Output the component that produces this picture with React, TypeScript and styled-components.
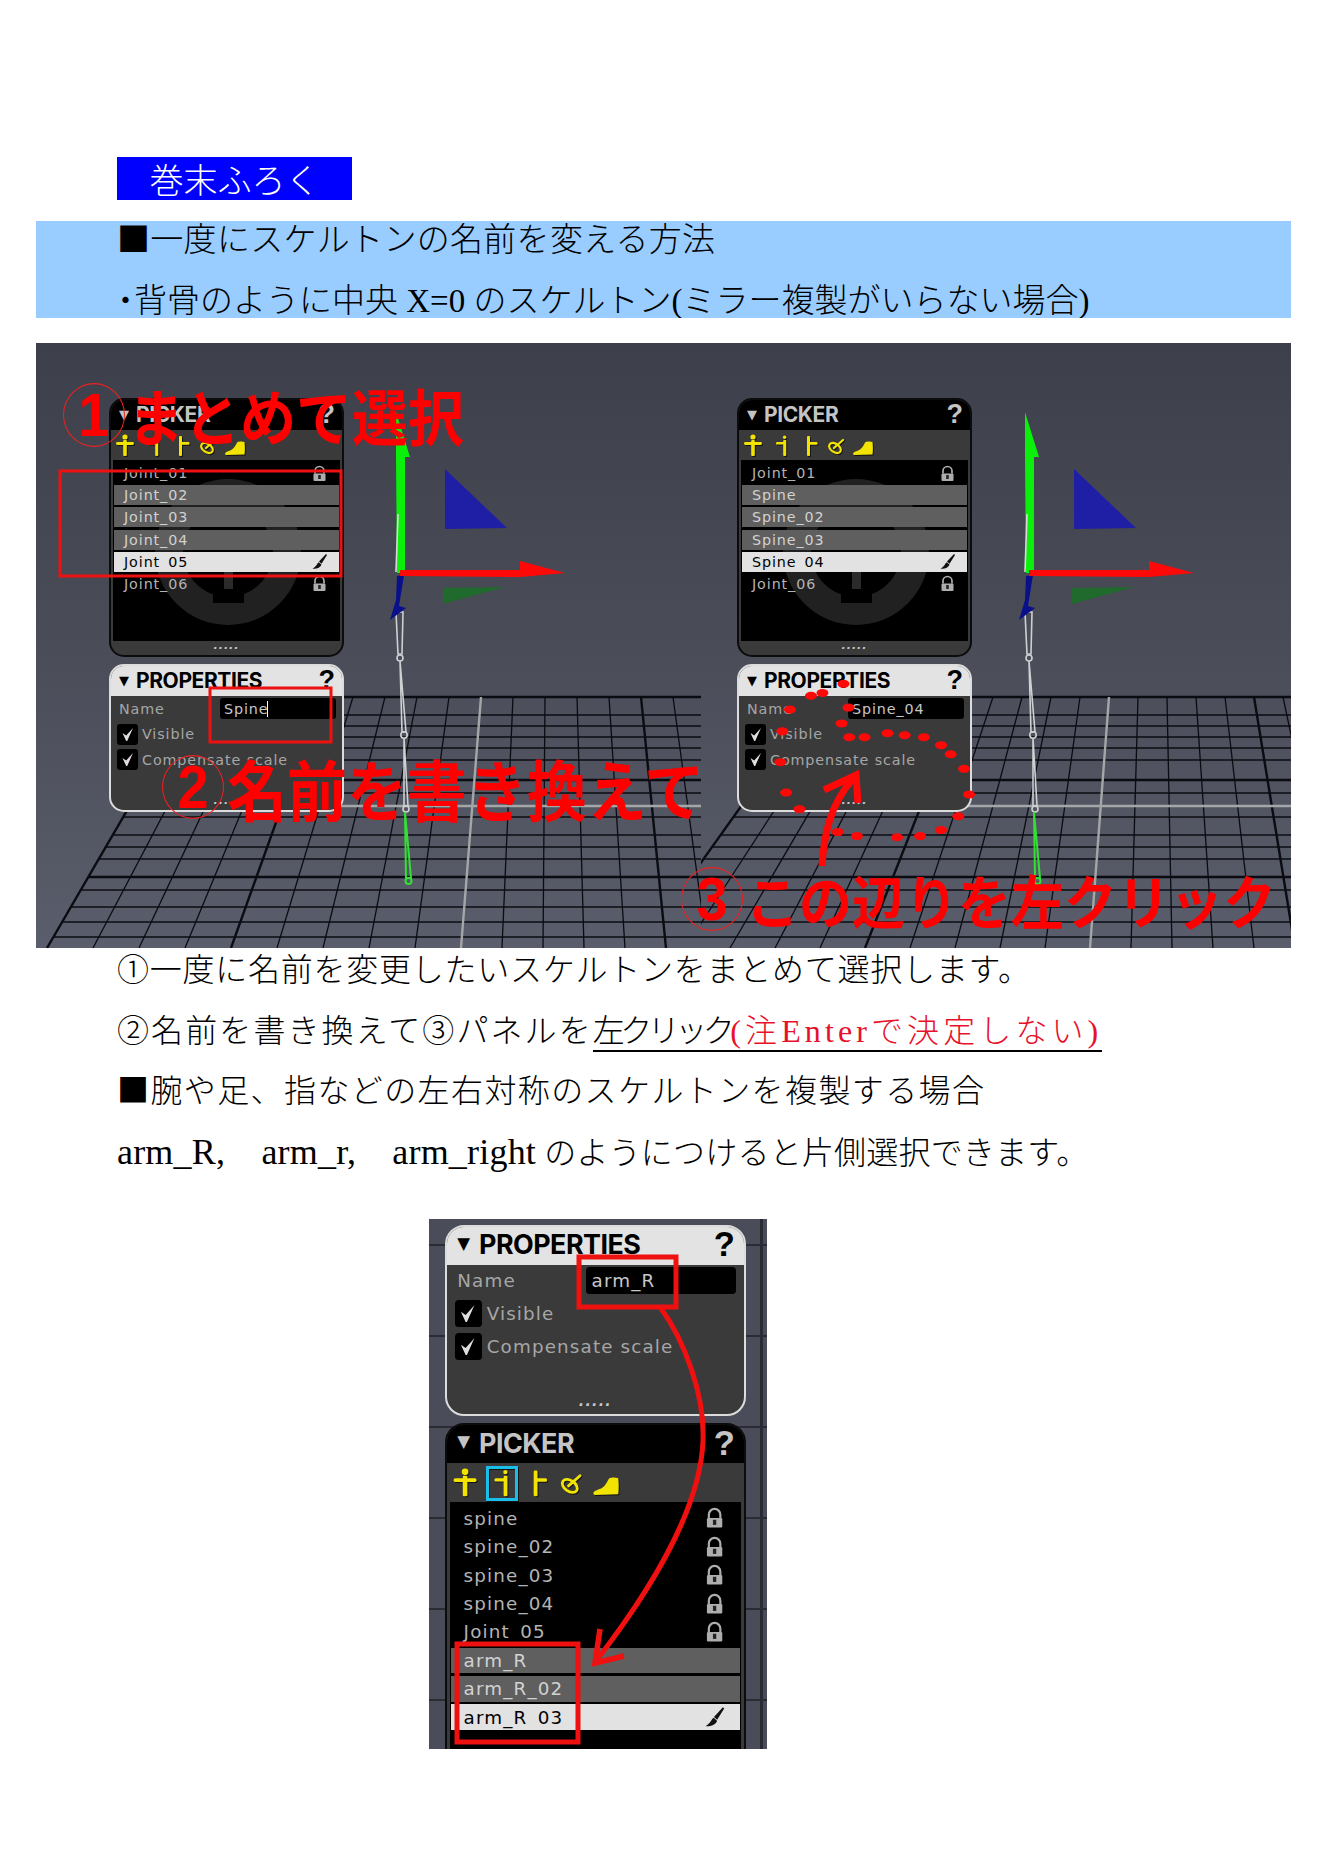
import React from "react";
import styled, { createGlobalStyle } from "styled-components";

const BODY_FONT = `"Liberation Serif", "Noto Sans CJK JP", serif`;
const GOTHIC = `"Noto Sans CJK JP", "Liberation Sans", sans-serif`;
const UI_FONT = `"DejaVu Sans", "Liberation Sans", sans-serif`;

const Global = createGlobalStyle`
  html, body { margin: 0; padding: 0; background: #fff; }
  body { font-family: ${BODY_FONT}; color: #000; }
`;

const Page = styled.div`
  width: 1328px;
  height: 1875px;
  box-sizing: border-box;
  padding: 157px 37px 0 36px;
  background: #fff;
  overflow: hidden;
`;

const Banner = styled.div`
  margin-left: 81px;
  width: 235px;
  height: 43px;
  display: flex;
  align-items: center;
  justify-content: center;
  background: #0000ff;
  color: #fff;
  font-size: 34px;
  font-weight: 300;
`;

const HeadBand = styled.div`
  margin-top: 21px;
  height: 97px;
  padding-left: 81px;
  display: flex;
  flex-direction: column;
  gap: 25px;
  background: #99ccff;
  overflow: hidden;
`;

const HeadLine = styled.div<{ $spacing?: number }>`
  height: 36px;
  line-height: 38px;
  font-size: 33px;
  font-weight: 300;
  white-space: nowrap;
  letter-spacing: ${(p) => p.$spacing ?? 0}px;
`;

const Square = styled.span`
  font-family: ${GOTHIC};
  font-weight: 400;
  line-height: 0;
`;

const HalfDot = styled.span`
  display: inline-block;
  width: 25px;
  margin-left: -8px;
`;

const Viewport = styled.div`
  position: relative;
  margin-top: 25px;
  height: 605px;
  overflow: hidden;
  background: linear-gradient(#3d3f4a 0%, #4a4c58 50%, #5a5d6b 100%);
`;

const CanvasSvg = styled.svg`
  position: absolute;
  inset: 0;
  width: 100%;
  height: 100%;
`;

const WindowSpot = styled.div<{ $x: number; $y: number }>`
  position: absolute;
  left: ${(p) => p.$x}px;
  top: ${(p) => p.$y}px;
`;

const PanelShell = styled.div<{ $light?: boolean; $h: number; $zoom?: number }>`
  width: 235px;
  height: ${(p) => p.$h}px;
  flex: none;
  box-sizing: border-box;
  zoom: ${(p) => p.$zoom ?? 1};
  display: flex;
  flex-direction: column;
  border-radius: 15px;
  border: 2px solid ${(p) => (p.$light ? "#dcdcdc" : "#0c0c0c")};
  background: #3a3a3a;
  overflow: hidden;
  font-family: ${UI_FONT};
`;

const PanelHeader = styled.div<{ $light?: boolean }>`
  flex: 0 0 30px;
  box-sizing: border-box;
  display: flex;
  align-items: center;
  padding: 0 7px 2px 8px;
  background: ${(p) => (p.$light ? "#e3e3e3" : "#000")};
  color: ${(p) => (p.$light ? "#000" : "#c4c4c4")};
`;

const Caret = styled.span`
  font-size: 13px;
  line-height: 1;
  width: 17px;
  font-family: "DejaVu Sans", sans-serif;
`;

const Title = styled.span`
  font-family: "Inter", "Liberation Sans", sans-serif;
  font-weight: 700;
  font-size: 21px;
  letter-spacing: -0.4px;
`;

const Help = styled.span`
  margin-left: auto;
  font-family: "Liberation Sans", sans-serif;
  font-weight: 700;
  font-size: 27px;
  line-height: 1;
`;

const ToolBar = styled.div`
  flex: 0 0 30px;
  display: flex;
  align-items: center;
  padding: 2px 0 0 3px;
  box-sizing: border-box;
`;

const ToolIcon = styled.svg<{ $after: number; $active?: boolean }>`
  width: 22px;
  height: 24px;
  margin-right: ${(p) => p.$after}px;
  flex: none;
  overflow: visible;
  filter: drop-shadow(1px 1px 0 #141414);
  ${(p) => (p.$active ? "outline: 3px solid #19bfe8; outline-offset: -1px;" : "")}
`;

const JointList = styled.div`
  position: relative;
  flex: 1;
  margin: 0 2px;
  padding-top: 3px;
  background: #000;
  display: flex;
  flex-direction: column;
  gap: 2.2px;
  overflow: hidden;
`;

const Watermark = styled.svg`
  position: absolute;
  left: 42px;
  top: 19px;
  width: 146px;
  height: 146px;
`;

type RowKind = "plain" | "picked" | "active";

const JointRow = styled.div<{ $kind: RowKind }>`
  position: relative;
  flex: 0 0 20px;
  display: flex;
  align-items: center;
  justify-content: space-between;
  padding: 0 12px 0 10px;
  margin: 0 1px;
  font-size: 14.3px;
  letter-spacing: 0.9px;
  color: ${(p) => (p.$kind === "active" ? "#000" : p.$kind === "picked" ? "#d2d2d2" : "#b4b4b4")};
  background: ${(p) =>
    p.$kind === "active" ? "#e2e2e2" : p.$kind === "picked" ? "#5f5f5f" : "transparent"};
`;

const HiddenBar = styled.span`
  color: transparent;
`;

const RowIcon = styled.svg`
  width: 15px;
  height: 17px;
  flex: none;
`;

const PanelFooter = styled.div`
  flex: 0 0 14px;
  display: flex;
  justify-content: center;
  align-items: flex-start;
  color: #c8c8c8;
  font-size: 11px;
  line-height: 9px;
  font-style: italic;
  font-weight: 700;
  letter-spacing: 1px;
`;

const PropBody = styled.div`
  flex: 1;
  display: flex;
  flex-direction: column;
  padding: 2px 6px 0 6px;
  gap: 4.5px;
  color: #a6a6a6;
  font-size: 14.3px;
  letter-spacing: 0.9px;
`;

const NameRow = styled.div`
  display: flex;
  align-items: center;
  height: 21px;
  margin-left: 2px;
`;

const NameLabel = styled.span`
  width: 101px;
  flex: none;
`;

const NameField = styled.div`
  width: 118px;
  height: 21px;
  box-sizing: border-box;
  padding-left: 4px;
  display: flex;
  align-items: center;
  background: #000;
  border-radius: 3px;
  color: #c8c8c8;
`;

const TextCaret = styled.i`
  display: inline-block;
  width: 1px;
  height: 16px;
  margin-left: -1px;
  background: #fff;
`;

const CheckRow = styled.div`
  display: flex;
  align-items: center;
  height: 21px;
  gap: 4px;
`;

const CheckBox = styled.div`
  width: 21px;
  height: 21px;
  border-radius: 3px;
  background: #000;
  display: flex;
  align-items: center;
  justify-content: center;
  flex: none;
`;

const Spacer = styled.div`
  flex: 1;
`;

const Annotation = styled.div<{ $x: number; $y: number; $size: number }>`
  position: absolute;
  left: ${(p) => p.$x}px;
  top: ${(p) => p.$y}px;
  display: flex;
  align-items: center;
  color: #ff0000;
  font-family: ${GOTHIC};
  font-weight: 700;
  font-size: ${(p) => p.$size}px;
  line-height: 1;
  white-space: nowrap;
  transform-origin: left center;
  transform: scaleY(1.1);
`;

const CircledNumber = styled.span`
  width: 62px;
  height: 58px;
  flex: none;
  box-sizing: border-box;
  margin-right: 3px;
  display: flex;
  align-items: center;
  justify-content: center;
  border: 1.5px solid #f02020;
  border-radius: 50%;
  font-family: "Liberation Sans", sans-serif;
  font-size: 56px;
`;

const BodyBlock = styled.div`
  margin-left: 81px;
  display: flex;
  flex-direction: column;
  gap: 16.5px;
`;

const BodyLine = styled.div<{ $spacing?: number }>`
  height: 44px;
  line-height: 44px;
  font-size: 32px;
  font-weight: 300;
  white-space: nowrap;
  letter-spacing: ${(p) => p.$spacing ?? 0}px;
`;

const Spaced = styled.span<{ $spacing: number }>`
  letter-spacing: ${(p) => p.$spacing}px;
`;

const Underlined = styled.span`
  display: inline-block;
  line-height: 38px;
  border-bottom: 2px solid #000;
`;

const RedNote = styled.span`
  color: #e8112a;
  letter-spacing: 4.1px;
`;

const LatinName = styled.span`
  font-size: 36px;
`;

const Figure = styled.div`
  position: relative;
  margin: 45px 0 0 393px;
  width: 338px;
  height: 530px;
  box-sizing: border-box;
  padding: 6px 0 0 16px;
  display: flex;
  flex-direction: column;
  gap: 7px;
  overflow: hidden;
  background-color: #4a4c59;
  background-image: linear-gradient(#2b2c33 2px, transparent 2px),
    linear-gradient(90deg, transparent 331px, #2b2c33 331px, #2b2c33 334px, transparent 334px);
  background-size: 100% 91px, 100% 100%;
  background-position: 0 25px, 0 0;
`;

const Lock = () => (
  <RowIcon viewBox="0 0 15 17">
    <path d="M3 8.5V6a4.5 4.5 0 0 1 9 0V8.5" fill="none" stroke="#aeaeae" strokeWidth="1.7" />
    <rect x="1.5" y="8.5" width="12" height="7.5" rx="1" fill="#aeaeae" />
    <rect x="6.2" y="10" width="2.6" height="4" fill="#222" />
  </RowIcon>
);

const Brush = () => (
  <RowIcon viewBox="0 0 15 17">
    <path d="M14 1 L7 8.5 L9.5 10.8 L15 2 Z" fill="#111" />
    <path d="M6.8 9.2 C5 10.2 5 13 0.5 15.8 C5 16 8.8 14.4 9.4 11.5 Z" fill="#111" />
  </RowIcon>
);

const Y = "#f2e400";

const toolIcons: { after: number; draw: React.ReactNode }[] = [
  {
    after: 7,
    draw: (
      <g fill={Y}>
        <circle cx="11" cy="3" r="2.6" />
        <rect x="9.2" y="6" width="3.6" height="16" rx="1" />
        <rect x="2" y="8" width="18" height="3" rx="1.4" />
      </g>
    ),
  },
  {
    after: 8,
    draw: (
      <g fill={Y}>
        <circle cx="13.6" cy="3.2" r="1.7" />
        <rect x="12.2" y="6" width="3" height="16" rx="1" />
        <rect x="5" y="8" width="9" height="2.6" rx="1.2" />
      </g>
    ),
  },
  {
    after: 2,
    draw: (
      <g fill={Y}>
        <rect x="6" y="2" width="3" height="20" rx="1" />
        <rect x="7" y="8" width="9.5" height="2.8" rx="1.2" />
      </g>
    ),
  },
  {
    after: 5,
    draw: (
      <g fill="none" stroke={Y} strokeWidth="2.2" strokeLinecap="round">
        <ellipse cx="10" cy="14" rx="6.5" ry="4.2" transform="rotate(35 10 14)" />
        <path d="M18 6 L9 14" />
      </g>
    ),
  },
  {
    after: 0,
    draw: (
      <path
        d="M1 20 C1 17.5 6 17 8 15.5 C11 13.5 12 10 13.5 8 C15 7.5 18 7 20.5 8 C21 12 21 17 20.5 20.5 L2 21 Z"
        fill={Y}
      />
    ),
  },
];

const joints = (names: string[], picked: number[], active: number, locked: number[]) =>
  names.map((name, i) => ({
    name,
    kind: (i === active ? "active" : picked.includes(i) ? "picked" : "plain") as RowKind,
    locked: locked.includes(i),
    barHidden: i === active || name === "Joint_05",
  }));

type JointInfo = ReturnType<typeof joints>[number];

const JointName: React.FC<{ name: string; barHidden: boolean }> = ({ name, barHidden }) => {
  if (!barHidden) return <span>{name}</span>;
  const cut = name.lastIndexOf("_");
  return (
    <span>
      {name.slice(0, cut)}
      <HiddenBar>_</HiddenBar>
      {name.slice(cut + 1)}
    </span>
  );
};

const Picker: React.FC<{
  rows: JointInfo[];
  zoom?: number;
  activeTool?: number;
  watermark?: boolean;
  height?: number;
}> = ({ rows, zoom, activeTool, watermark, height = 259 }) => (
  <PanelShell $h={height} $zoom={zoom}>
    <PanelHeader>
      <Caret>▼</Caret>
      <Title>PICKER</Title>
      <Help>?</Help>
    </PanelHeader>
    <ToolBar>
      {toolIcons.map((ic, i) => (
        <ToolIcon key={i} viewBox="0 0 22 24" $after={ic.after} $active={i === activeTool}>
          {ic.draw}
        </ToolIcon>
      ))}
    </ToolBar>
    <JointList>
      {watermark && (
        <Watermark viewBox="0 0 146 146">
          <circle cx="73" cy="73" r="73" fill="#212121" />
          <circle cx="73" cy="73" r="45" fill="#000" />
          <rect x="58" y="112" width="31" height="12" fill="#000" />
          <rect x="69" y="92" width="9" height="18" fill="#2b2b2b" />
        </Watermark>
      )}
      {rows.map((r) => (
        <JointRow key={r.name} $kind={r.kind}>
          <JointName name={r.name} barHidden={r.barHidden} />
          {r.kind === "active" ? <Brush /> : r.locked ? <Lock /> : null}
        </JointRow>
      ))}
    </JointList>
    <PanelFooter>.....</PanelFooter>
  </PanelShell>
);

const Tick = () => (
  <svg width="14" height="15" viewBox="0 0 14 15">
    <path d="M1.5 6 L5.2 8.6 L12 1 L6.2 14 L5.2 14 Z" fill="#dedede" />
  </svg>
);

const Properties: React.FC<{ value: string; zoom?: number; caret?: boolean; height?: number }> = ({
  value,
  zoom,
  caret,
  height = 148,
}) => (
  <PanelShell $h={height} $light $zoom={zoom}>
    <PanelHeader $light>
      <Caret>▼</Caret>
      <Title>PROPERTIES</Title>
      <Help>?</Help>
    </PanelHeader>
    <PropBody>
      <NameRow>
        <NameLabel>Name</NameLabel>
        <NameField>
          {value}
          {caret && <TextCaret />}
        </NameField>
      </NameRow>
      <CheckRow>
        <CheckBox>
          <Tick />
        </CheckBox>
        Visible
      </CheckRow>
      <CheckRow>
        <CheckBox>
          <Tick />
        </CheckBox>
        Compensate scale
      </CheckRow>
      <Spacer />
    </PropBody>
    <PanelFooter>.....</PanelFooter>
  </PanelShell>
);

const HORIZONTALS = [697, 715, 726, 737, 748, 760, 780, 793, 817, 835, 847, 859, 877, 890, 907, 922, 937];
const THICK_ROWS = [697, 780, 877];

const GridFloor: React.FC<{
  axisTop: number;
  axisBottom: number;
  topStep: number;
  leftStep: number;
  rightStep: number;
  minI: number;
  maxI: number;
  clip: string;
}> = ({ axisTop, axisBottom, topStep, leftStep, rightStep, minI, maxI, clip }) => {
  const xAt = (i: number, y: number) => {
    const t = (y - 697) / 251;
    const top = axisTop + i * topStep;
    const bottom = axisBottom + i * (i < 0 ? leftStep : rightStep);
    return top + (bottom - top) * t;
  };
  const columns: number[] = [];
  for (let i = minI; i <= maxI; i++) columns.push(i);
  return (
    <g clipPath={`url(#${clip})`}>
      {HORIZONTALS.map((y) => (
        <line
          key={y}
          x1={xAt(minI, y)}
          x2={xAt(maxI, y)}
          y1={y}
          y2={y}
          stroke="#0b0c12"
          strokeWidth={THICK_ROWS.includes(y) ? 2.6 : 1.5}
        />
      ))}
      {columns
        .filter((i) => i !== 0)
        .map((i) => (
          <line
            key={i}
            x1={xAt(i, 697)}
            y1={697}
            x2={xAt(i, 948)}
            y2={948}
            stroke="#0b0c12"
            strokeWidth={i % 5 === 0 || i === minI ? 2.4 : 1.3}
          />
        ))}
      <line x1={xAt(0, 697)} y1={697} x2={xAt(0, 948)} y2={948} stroke="#a5a6a8" strokeWidth="2.4" />
      <line x1={xAt(minI, 806)} x2={xAt(maxI, 806)} y1={806} y2={806} stroke="#a5a6a8" strokeWidth="2.6" />
    </g>
  );
};

const Rig: React.FC<{ shift: number }> = ({ shift }) => (
  <g transform={`translate(${shift} 0)`}>
    <polygon points="1074,469 1074,529 1136,528" fill="#1f1fa5" />
    <polygon points="1072,588 1072,604 1134,587" fill="#1f6a2c" />
    <g fill="none" stroke="#cfd0d2" strokeWidth="1.6">
      <path d="M1025 612 L1032 612 L1031 654 L1027 654 Z" />
      <circle cx="1029" cy="658" r="3" />
      <path d="M1029 661 L1035 732 L1031 732 Z" />
      <circle cx="1033" cy="735" r="3.2" />
      <path d="M1033 738 L1037 806 L1033 806 Z" />
      <circle cx="1035" cy="809" r="3" />
    </g>
    <polygon points="1025,457 1025,412 1039,457 1034,457 1034,573 1026,573" fill="#0bf00b" />
    <path d="M1027 514 L1025 572" fill="none" stroke="#d8d8d8" strokeWidth="1.6" />
    <polygon points="1033,575 1026,576 1025,600 1019,620 1035,608 1028,606" fill="#0a0f8a" />
    <polygon points="1029,570 1149,570 1149,561 1194,573 1149,577 1029,576" fill="#ff0808" />
    <g fill="none" stroke="#33e033" strokeWidth="2">
      <path d="M1034 812 L1040 878 L1035 878 Z" />
      <circle cx="1037.5" cy="881" r="3" />
    </g>
  </g>
);

const DOTS: [number, number][] = [
  [290, 900], [320, 893], [375, 870], [235, 935], [215, 990], [210, 1068], [225, 1145], [260, 1187],
  [360, 1245], [410, 1255], [515, 1258], [575, 1255], [630, 1240], [675, 1205], [703, 1150], [690, 1085],
  [655, 1048], [630, 1025], [585, 1005], [535, 1000], [490, 995], [430, 1005], [390, 1005], [370, 970], [388, 930],
];

const leftRows = joints(
  ["Joint_01", "Joint_02", "Joint_03", "Joint_04", "Joint_05", "Joint_06"],
  [1, 2, 3],
  4,
  [0, 5]
);
const rightRows = joints(
  ["Joint_01", "Spine", "Spine_02", "Spine_03", "Spine_04", "Joint_06"],
  [1, 2, 3],
  4,
  [0, 5]
);
const armRows = joints(
  ["spine", "spine_02", "spine_03", "spine_04", "Joint_05", "arm_R", "arm_R_02", "arm_R_03"],
  [5, 6],
  7,
  [0, 1, 2, 3, 4]
);

export default function App() {
  return (
    <>
      <Global />
      <Page>
        <Banner>巻末ふろく</Banner>
        <HeadBand>
          <HeadLine $spacing={0.3}>
            <Square>■</Square>一度にスケルトンの名前を変える方法
          </HeadLine>
          <HeadLine>
            <HalfDot>・</HalfDot>背骨のように中央 X=0 のスケルトン(ミラー複製がいらない場合)
          </HeadLine>
        </HeadBand>
        <Viewport>
          <CanvasSvg viewBox="36 343 1255 605">
            <defs>
              <clipPath id="leftHalf">
                <rect x="36" y="343" width="665" height="605" />
              </clipPath>
              <clipPath id="rightHalf">
                <rect x="701" y="343" width="590" height="605" />
              </clipPath>
            </defs>
            <GridFloor axisTop={481} axisBottom={461} topStep={32} leftStep={46} rightStep={41} minI={-9} maxI={8} clip="leftHalf" />
            <GridFloor axisTop={1109} axisBottom={1090} topStep={29} leftStep={45} rightStep={41} minI={-10} maxI={8} clip="rightHalf" />
            <Rig shift={-629} />
            <Rig shift={0} />
          </CanvasSvg>

          <WindowSpot $x={73} $y={55}>
            <Picker rows={leftRows} watermark />
          </WindowSpot>
          <WindowSpot $x={73} $y={321}>
            <Properties value="Spine" caret />
          </WindowSpot>
          <WindowSpot $x={701} $y={55}>
            <Picker rows={rightRows} watermark />
          </WindowSpot>
          <WindowSpot $x={701} $y={321}>
            <Properties value="Spine_04" />
          </WindowSpot>

          <CanvasSvg viewBox="36 343 1255 605">
            <rect x="60" y="471" width="281" height="105" fill="none" stroke="#ef1010" strokeWidth="3" />
            <rect x="210" y="688" width="121" height="54" fill="none" stroke="#ef1010" strokeWidth="3" />
            {DOTS.map(([x, y], i) => (
              <ellipse key={i} cx={700 + x / 2.613} cy={340 + y / 2.53} rx="6" ry="4" fill="#ff0808" />
            ))}
            <path d="M822 866 C824 835 830 805 852 780" fill="none" stroke="#ff0808" strokeWidth="7" />
            <path d="M824 790 L856 775 L858 803" fill="none" stroke="#ff0808" strokeWidth="7" />
          </CanvasSvg>

          <Annotation $x={27} $y={43} $size={56}>
            <CircledNumber>1</CircledNumber>まとめて選択
          </Annotation>
          <Annotation $x={126} $y={414} $size={60}>
            <CircledNumber>2</CircledNumber>名前を書き換えて
          </Annotation>
          <Annotation $x={645} $y={527} $size={53}>
            <CircledNumber>3</CircledNumber>この辺りを左クリック
          </Annotation>
        </Viewport>
        <BodyBlock>
          <BodyLine $spacing={0.75}>①一度に名前を変更したいスケルトンをまとめて選択します。</BodyLine>
          <BodyLine>
            <Spaced $spacing={2.1}>②名前を書き換えて③パネルを</Spaced>
            <Underlined>
              <Spaced $spacing={-4.5}>左クリック</Spaced>
              <RedNote>(注Enterで決定しない)</RedNote>
            </Underlined>
          </BodyLine>
          <BodyLine $spacing={1.4}>
            <Square>■</Square>腕や足、指などの左右対称のスケルトンを複製する場合
          </BodyLine>
          <BodyLine $spacing={0.2}>
            <LatinName>arm_R,　arm_r,　arm_right</LatinName> のようにつけると片側選択できます。
          </BodyLine>
        </BodyBlock>
        <Figure>
          <Properties value="arm_R" zoom={1.28} height={149.5} />
          <Picker rows={armRows} zoom={1.28} activeTool={1} height={290} />
          <CanvasSvg viewBox="429 1218 338 530">
            <rect x="579" y="1256" width="97" height="50" fill="none" stroke="#ef1010" strokeWidth="5" />
            <rect x="457" y="1643" width="121" height="98" fill="none" stroke="#ef1010" strokeWidth="5" />
            <path d="M660 1306 C685 1340 705 1395 703 1440 C700 1510 650 1590 596 1660" fill="none" stroke="#f01010" strokeWidth="5" />
            <path d="M600 1628 L595 1662 L624 1655" fill="none" stroke="#f01010" strokeWidth="5.5" />
          </CanvasSvg>
        </Figure>
      </Page>
    </>
  );
}
